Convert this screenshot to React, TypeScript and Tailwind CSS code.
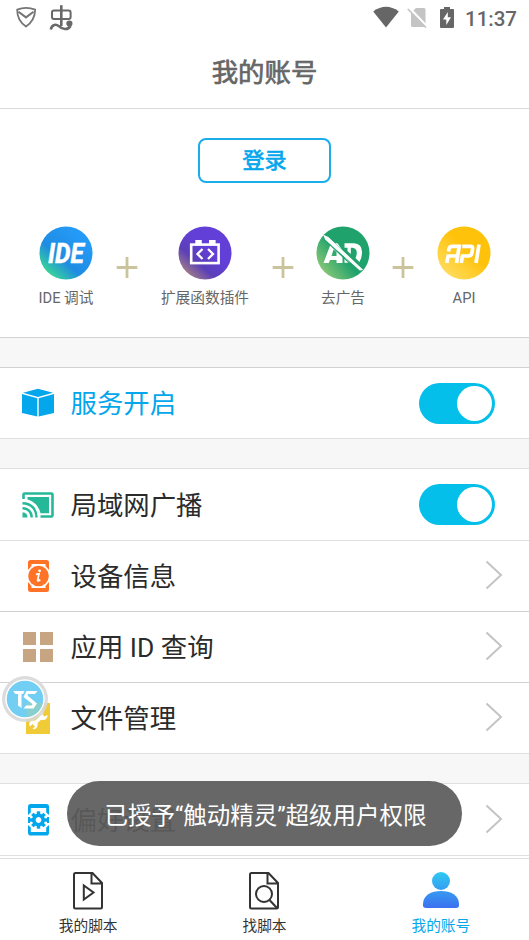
import React from "react";

const ShieldIcon = () => (
  <svg width="22" height="24" viewBox="0 0 22 24" fill="none" stroke="#757575">
    <path d="M2.2 3.6 Q11 0.2 20.2 3.6 Q20 14.5 11 20.6 Q2 14.5 2.2 3.6Z" strokeWidth="1.8" strokeLinejoin="round" />
    <path d="M3.5 5.8 L11 11.4 L18.5 5.8" strokeWidth="2" />
  </svg>
);

const BugIcon = () => (
  <svg width="26" height="28" viewBox="0 0 26 28" fill="none" stroke="#686868" strokeWidth="2">
    <rect x="3" y="7.6" width="18.6" height="8.4" rx="2" />
    <path d="M12.3 2.2V23" strokeWidth="2.6" />
    <path d="M1.8 26.6 C3 21 7 21 10 23.2 C13 26.5 19 27.5 21.500 23" strokeWidth="2.6" />
    <circle cx="20.4" cy="20.600" r="2.100" fill="#686868" />
  </svg>
);

const StatusBar = () => (
  <div className="flex h-9 items-start text-[#666]">
    <div className="ml-[15px] mt-[6px]">
      <ShieldIcon />
    </div>
    <div className="ml-[12px] mt-[3px]">
      <BugIcon />
    </div>
    <div className="ml-auto mt-[6px] flex">
      <svg width="26" height="22" viewBox="0 0 26 22" fill="#666">
        <path d="M0.2 5.5 Q13 -3.8 25.8 5.5 L13 21.4Z" />
      </svg>
      <svg className="ml-[8px]" width="22" height="22" viewBox="0 0 22 22">
        <path d="M9 2H17Q18.5 2 18.5 3.5V19.5Q18.5 21 17 21H5.500Q4 21 4 19.500V7Z" fill="#c4c4c4" />
        <path d="M2.200 2.200L20.400 21.200" stroke="#fff" strokeWidth="3" />
        <path d="M0.800 3L19 21.500" stroke="#c4c4c4" strokeWidth="1.700" />
      </svg>
      <svg className="ml-[11px]" width="14" height="22" viewBox="0 0 14 22">
        <path d="M4 1H10V3H13Q14 3 14 4V21Q14 22 13 22H1Q0 22 0 21V4Q0 3 1 3H4Z" fill="#666" />
        <path d="M7.800 6L3 13.400H6.300V19L11 11.300H7.800Z" fill="#fff" />
      </svg>
    </div>
    <div className="ml-[11px] mr-[12px] mt-[7px] text-[20.5px] font-medium leading-6">
      11:37
    </div>
  </div>
);

const IdeIcon = () => (
  <svg width="54" height="54" viewBox="0 0 54 54">
    <defs>
      <linearGradient id="ide" x1="0.1" y1="0.9" x2="0.8" y2="0.1">
        <stop offset="0" stopColor="#3be08c" />
        <stop offset="0.4" stopColor="#1f8ce2" />
        <stop offset="1" stopColor="#259cfa" />
      </linearGradient>
    </defs>
    <circle cx="27" cy="27" r="26.500" fill="url(#ide)" />
    <text
      x="9"
      y="37"
      textLength="36"
      lengthAdjust="spacingAndGlyphs"
      fill="#fff"
      stroke="#fff"
      strokeWidth="0.300"
      className="font-['Roboto'] text-[28px] font-extrabold italic"
    >
      IDE
    </text>
  </svg>
);

const PluginIcon = () => (
  <svg width="54" height="54" viewBox="0 0 54 54">
    <defs>
      <linearGradient id="plugin" x1="0.1" y1="0.85" x2="0.5" y2="0.4">
        <stop offset="0" stopColor="#a07d88" />
        <stop offset="0.5" stopColor="#5b3fb8" />
        <stop offset="1" stopColor="#623fd6" />
      </linearGradient>
    </defs>
    <circle cx="27" cy="27" r="26.500" fill="url(#plugin)" />
    <g fill="none" stroke="#fff">
      <rect x="13.200" y="18.600" width="27.400" height="18.500" strokeWidth="2.600" />
      <path d="M17.300 16.300H23.800M31 16.300H37.600" strokeWidth="4.600" />
      <path d="M24.500 23L19.500 28L24.500 33M30 23L35 28L30 33" strokeWidth="2.300" />
    </g>
  </svg>
);

const NoAdIcon = () => (
  <svg width="54" height="54" viewBox="0 0 54 54">
    <defs>
      <linearGradient id="noad" x1="0.05" y1="0.85" x2="0.6" y2="0.4">
        <stop offset="0" stopColor="#91ca77" />
        <stop offset="0.75" stopColor="#1fa26c" />
        <stop offset="1" stopColor="#1fa26c" />
      </linearGradient>
    </defs>
    <circle cx="27" cy="27" r="26.500" fill="url(#noad)" />
    <path
      d="M7.500 37L14.500 18.500L26.500 30V37H20.500V34H14L12.800 37ZM15.500 30H20.500V26L17.500 23.500Z"
      fill="#fff"
      fillRule="evenodd"
    />
    <path d="M18.500 17.300H21.500L26.800 25L26.800 26.500Z" fill="#fff" />
    <path
      d="M28.500 17.200H38Q46 17.800 46 26Q46 32 43.500 36L39.500 32Q41 29 40.700 26Q40.300 22 36.500 21.700H34.800V28L31.500 25V21.700H28.500ZM28.500 31.500L34.500 36.700H28.500Z"
      fill="#fff"
    />
    <path d="M9 8.500L47 44.500M9 14L43 46" stroke="#1fa26c" strokeWidth="1.200" />
    <path d="M8.200 9.800L12 11.500L46 43.500L44 43.800L9.800 13.500Z" fill="#fff" stroke="#fff" strokeWidth="1.200" />
  </svg>
);

const ApiIcon = () => (
  <svg width="54" height="54" viewBox="0 0 54 54">
    <defs>
      <linearGradient id="api" x1="0.1" y1="0.9" x2="0.55" y2="0.4">
        <stop offset="0" stopColor="#ffdd62" />
        <stop offset="1" stopColor="#ffc20a" />
      </linearGradient>
    </defs>
    <circle cx="27" cy="27" r="26.500" fill="url(#api)" />
    <g fill="none" stroke="#fff" strokeWidth="3.700">
      <path d="M9.800 37L11.100 30H20.500M11.500 25.500L12 23Q12.500 20.300 15.500 20.300H22.200L19.500 37" />
      <path d="M25.200 20.300H33.500Q36 20.300 35.500 23L35 26.500Q34.500 30 31 30H25.500L24.200 37" />
      <path d="M42 18.500L39 37" />
    </g>
  </svg>
);

const CubeIcon = () => (
  <svg width="32" height="30" viewBox="0 0 32 30" fill="#04a6ec">
    <path d="M1 4.800L16 0.800L31 4.800L16 9Z" />
    <path d="M0 6L15.300 10.300V28.600L0 25Z" />
    <path d="M32 6L16.700 10.300V28.600L32 25Z" />
  </svg>
);

const CastIcon = () => (
  <svg width="32" height="26" viewBox="0 0 32 26" fill="none" stroke="#26b999">
    <path d="M1.500 7V2.500Q1.500 1.500 2.500 1.500H29.500Q30.500 1.500 30.500 2.500V23.500Q30.500 24.500 29.500 24.500H18.500" strokeWidth="2.600" />
    <path d="M5.500 5H27V21.300H18.500C17 14.500 12.500 9.500 5.500 7.500Z" fill="#26b999" stroke="none" />
    <path d="M0.500 11.300C9 11.300 14.500 17 14.500 25.500M0.500 16.300C6 16.300 9.700 20 9.700 25.500" strokeWidth="2.400" />
    <path d="M0.500 20.300Q5.500 20.800 5.500 25.500H0.500Z" fill="#26b999" stroke="none" />
  </svg>
);

const InfoIcon = () => (
  <svg width="21" height="32" viewBox="0 0 21 32">
    <rect width="21" height="32" rx="2.500" fill="#ff7327" />
    <path d="M3.500 4H17.500V6L21 10V22L17.500 26V28H3.500V26L0 22V10L3.500 6Z" fill="#fff" />
    <circle cx="10.500" cy="16" r="10.300" fill="#ff7327" />
    <path d="M8 14.300L11 13.800L9.600 20.300Q9.700 21.600 12.300 19.800" fill="none" stroke="#fff" strokeWidth="1.700" />
    <circle cx="11.600" cy="10.800" r="1.400" fill="#fff" />
  </svg>
);

const GridIcon = () => (
  <svg width="30" height="30" viewBox="0 0 30 30" fill="#c8a582">
    <path d="M0 0H13V13H0ZM17 0H30V13H17ZM0 17H13V30H0ZM17 17H30V30H17Z" />
  </svg>
);

const WrenchIcon = () => (
  <svg width="24" height="31" viewBox="0 0 24 31">
    <rect width="24" height="31" fill="#efcb38" />
    <path d="M7.500 21.500L16.500 13" stroke="#fff" strokeWidth="3.400" />
    <path d="M3.200 20.500A4.300 4.300 0 1 1 6.500 26L9 23.500L6.500 21L4 23.500A4.300 4.300 0 0 1 3.200 20.500Z" fill="#fff" />
    <path d="M18 8.200A4.500 4.500 0 1 0 21.500 12L18.500 13.500L16.300 11.300Z" fill="#fff" />
  </svg>
);

const gearTeeth = [0, 45, 90, 135, 180, 225, 270, 315];

const GearIcon = () => (
  <svg width="21" height="32" viewBox="0 0 21 32">
    <rect width="21" height="31.500" rx="2.800" fill="#04a6ec" />
    <path d="M2.800 4H18.200V8.500L21 11V13H19V19H21V21L18.200 23.500V28H2.800V23.500L0 21V19H2V13H0V11L2.800 8.500Z" fill="#fff" />
    <g transform="translate(10.5 16)">
      {gearTeeth.map((deg) => (
        <path key={deg} d="M-1.700 -8.700H1.700V-5H-1.700Z" fill="#04a6ec" transform={`rotate(${deg})`} />
      ))}
      <circle r="4.700" fill="none" stroke="#04a6ec" strokeWidth="3.600" />
    </g>
  </svg>
);

const Chevron = () => (
  <svg className="mb-[2px] mr-[26px]" width="18" height="30" viewBox="0 0 18 30" fill="none" stroke="#c4c4c4" strokeWidth="2">
    <path d="M1.500 1.500L16 15L1.500 28.500" />
  </svg>
);

const Toggle = () => (
  <div className="mr-[34px] flex h-[41px] w-[76px] items-center justify-end rounded-full bg-[#04bfe9] pr-[3px]">
    <div className="h-[35px] w-[35px] rounded-full bg-white" />
  </div>
);

interface RowProps {
  icon: React.ReactNode;
  label: string;
  active?: boolean;
  toggle?: boolean;
}

const Row = ({ icon, label, active, toggle }: RowProps) => (
  <div className="flex h-full items-center">
    <div className="ml-[18px] flex w-10 justify-center">{icon}</div>
    <div className={`ml-[12.500px] pt-[2px] text-[26.400px] leading-9 ${active ? "text-[#04a6ec]" : "text-[#2b2b2b]"}`}>
      {label}
    </div>
    <div className="ml-auto">{toggle ? <Toggle /> : <Chevron />}</div>
  </div>
);

const Feature = ({ icon, label, width }: { icon: React.ReactNode; label: string; width: string }) => (
  <div className={`flex flex-col items-center ${width}`}>
    {icon}
    <div className="mt-[6px] whitespace-nowrap text-[14.700px] leading-6 text-[#666]">{label}</div>
  </div>
);

const Plus = () => (
  <svg className="mt-[31px] shrink-0" width="34" height="21" viewBox="0 0 34 21" stroke="#cac39c" strokeWidth="2.800">
    <path d="M6.700 10.500H27.300M17 0V21" />
  </svg>
);

const ScriptIcon = () => (
  <svg width="30" height="38" viewBox="0 0 30 38" fill="none" stroke="#333" strokeWidth="2">
    <path d="M1 2.500Q1 1 2.500 1H19.500L29 11V35Q29 36.500 27.500 36.500H2.500Q1 36.500 1 35ZM18.500 1V11.500H29" />
    <path d="M10.800 13.500V27.500L20.500 20.500Z" />
  </svg>
);

const FindIcon = () => (
  <svg width="30" height="38" viewBox="0 0 30 38" fill="none" stroke="#333" strokeWidth="2">
    <path d="M1 2.500Q1 1 2.500 1H19.500L29 11V35Q29 36.500 27.500 36.500H2.500Q1 36.500 1 35ZM18.500 1V11.500H29" />
    <circle cx="15" cy="22" r="8" />
    <path d="M20.500 28L28 36" />
  </svg>
);

const UserIcon = () => (
  <svg width="36" height="38" viewBox="0 0 36 38">
    <defs>
      <linearGradient id="user" gradientUnits="userSpaceOnUse" x1="0" y1="0" x2="0" y2="37">
        <stop offset="0" stopColor="#2fcaf2" />
        <stop offset="1" stopColor="#3d6df0" />
      </linearGradient>
    </defs>
    <g fill="url(#user)">
      <circle cx="18" cy="9" r="9" />
      <path d="M0 32C0 23.500 8 19 18 19S36 23.500 36 32V33.300Q36 36 33 36H3Q0 36 0 33.300Z" />
    </g>
  </svg>
);

const Tab = ({ icon, label, active }: { icon: React.ReactNode; label: string; active?: boolean }) => (
  <div className="flex flex-1 flex-col items-center pt-[13px]">
    {icon}
    <div className={`mt-[4px] text-[14.700px] leading-6 ${active ? "text-[#04a6ec]" : "text-[#333]"}`}>{label}</div>
  </div>
);

const FloatingBall = () => (
  <svg className="absolute left-[2px] top-[676px]" width="46" height="46" viewBox="0 0 46 46">
    <circle cx="23" cy="23" r="23" fill="#d8d8d8" fillOpacity="0.900" />
    <circle cx="23" cy="23" r="19.700" fill="#fff" />
    <circle cx="23" cy="23" r="18.300" fill="#72cff3" />
    <path d="M24.500 27H40.800A18.300 18.300 0 0 1 24.500 41.200Z" fill="#9dcfa9" opacity="0.500" />
    <path d="M11 15H22.500L21 18H19.500V32L16 29.500V18H13.500Z" fill="#fff" />
    <path d="M35.500 15L33 18H26L25.500 19.500L35 27.500L31.500 32.500H21.500L24 29.500H30L30.500 28L21.500 21L24.500 15Z" fill="#fff" />
  </svg>
);

export default function App() {
  return (
    <div className="relative flex h-[940px] w-[529px] flex-col overflow-hidden bg-white font-['Roboto','Noto_Sans_CJK_SC',sans-serif]">
      <StatusBar />
      <div className="flex h-[73px] items-center justify-center border-b border-[#d9d9d9] pt-[4px] text-[26.400px] text-[#666] [-webkit-text-stroke:0.700px_#666]">
        我的账号
      </div>

      <div className="h-[229px] border-b border-[#d2d2d2]">
        <div className="mx-auto mt-[29px] flex h-[45px] w-[133px] items-center justify-center rounded-[8px] border-2 border-[#1badea] text-[22px] text-[#04a6ec] [-webkit-text-stroke:0.700px_#04a6ec]">
          登录
        </div>
        <div className="ml-[22px] mt-[43px] flex w-[486px]">
          <Feature icon={<IdeIcon />} label="IDE 调试" width="w-[88px]" />
          <Plus />
          <Feature icon={<PluginIcon />} label="扩展函数插件" width="w-[122px]" />
          <Plus />
          <Feature icon={<NoAdIcon />} label="去广告" width="w-[86px]" />
          <Plus />
          <Feature icon={<ApiIcon />} label="API" width="w-[88px]" />
        </div>
      </div>

      <div className="h-[29px] bg-[#f7f7f7]" />
      <div className="h-[72px] border-y border-t-[#d2d2d2] border-b-[#dfdfdf]">
        <Row icon={<CubeIcon />} label="服务开启" active toggle />
      </div>

      <div className="h-[29px] bg-[#f7f7f7]" />
      <div className="h-[73px] border-y border-[#dfdfdf]">
        <Row icon={<CastIcon />} label="局域网广播" toggle />
      </div>
      <div className="h-[71px] border-b border-[#d2d2d2]">
        <Row icon={<InfoIcon />} label="设备信息" />
      </div>
      <div className="h-[71px] border-b border-[#d2d2d2]">
        <Row icon={<GridIcon />} label="应用 ID 查询" />
      </div>
      <div className="h-[71px] border-b border-[#dfdfdf]">
        <Row icon={<WrenchIcon />} label="文件管理" />
      </div>

      <div className="h-[29px] bg-[#f7f7f7]" />
      <div className="h-[73px] border-y border-[#dfdfdf]">
        <Row icon={<GearIcon />} label="偏好设置" />
      </div>

      <div className="mt-[2px] flex flex-1 border-t border-[#dfdfdf]">
        <Tab icon={<ScriptIcon />} label="我的脚本" />
        <Tab icon={<FindIcon />} label="找脚本" />
        <Tab icon={<UserIcon />} label="我的账号" active />
      </div>

      <FloatingBall />
      <div className="absolute left-[67px] top-[781px] flex h-[65px] w-[395px] items-center justify-center whitespace-nowrap rounded-full bg-[#5b5b5b]/93 pl-[2px] pt-[6px] text-[23.500px] text-white">
        已授予“触动精灵”超级用户权限
      </div>
    </div>
  );
}
